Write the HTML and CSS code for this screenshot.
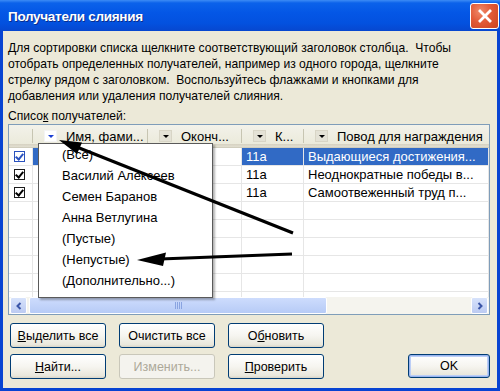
FILE: index.html
```html
<!DOCTYPE html>
<html lang="ru">
<head>
<meta charset="utf-8">
<title>Получатели слияния</title>
<link rel="stylesheet" href="styles.css">
</head>
<body>
<div class="window">
  <div class="titlebar">
    <span class="title">Получатели слияния</span>
    <span class="close">
      <svg width="16" height="16" viewBox="0 0 16 16"><path d="M3 3 L13 13 M13 3 L3 13" stroke="#fff" stroke-width="2.8" stroke-linecap="square"/></svg>
    </span>
  </div>
  <div class="client">
    <p class="intro">Для сортировки списка щелкните соответствующий заголовок столбца.&nbsp; Чтобы<br>отобрать определенных получателей, например из одного города, щелкните<br>стрелку рядом с заголовком.&nbsp; Воспользуйтесь флажками и кнопками для<br>добавления или удаления получателей слияния.</p>
    <div class="label">Списо<u>к</u> получателей:</div>
    <div class="listbox">
      <div class="grid">
        <div class="hdr">
          <div class="hc hc-check"></div>
          <div class="hc"><span class="dd active"></span><span class="ht">Имя, фами...</span></div>
          <div class="hc"><span class="dd"></span><span class="ht">Оконч...</span></div>
          <div class="hc"><span class="dd"></span><span class="ht">К...</span></div>
          <div class="hc hc-last"><span class="dd"></span><span class="ht">Повод для награждения</span></div>
        </div>
        <div class="row sel">
          <div class="c c-check"><span class="cb cb-sel"></span></div>
          <div class="c c-name"></div>
          <div class="c"></div>
          <div class="c">11а</div>
          <div class="c">Выдающиеся достижения...</div>
        </div>
        <div class="row">
          <div class="c c-check"><span class="cb"></span></div>
          <div class="c"></div>
          <div class="c"></div>
          <div class="c">11а</div>
          <div class="c">Неоднократные победы в...</div>
        </div>
        <div class="row">
          <div class="c c-check"><span class="cb"></span></div>
          <div class="c"></div>
          <div class="c"></div>
          <div class="c">11а</div>
          <div class="c">Самоотвеженный труд п...</div>
        </div>
        <div class="row"><div class="c c-check"></div><div class="c"></div><div class="c"></div><div class="c"></div><div class="c"></div></div>
        <div class="row"><div class="c c-check"></div><div class="c"></div><div class="c"></div><div class="c"></div><div class="c"></div></div>
        <div class="row"><div class="c c-check"></div><div class="c"></div><div class="c"></div><div class="c"></div><div class="c"></div></div>
        <div class="row"><div class="c c-check"></div><div class="c"></div><div class="c"></div><div class="c"></div><div class="c"></div></div>
        <div class="row"><div class="c c-check"></div><div class="c"></div><div class="c"></div><div class="c"></div><div class="c"></div></div>
        <div class="row"><div class="c c-check"></div><div class="c"></div><div class="c"></div><div class="c"></div><div class="c"></div></div>
      </div>
      <div class="hscroll">
        <span class="sbtn"><svg width="8" height="8" viewBox="0 0 8 8"><path d="M5.5 1 L2.5 4 L5.5 7" fill="none" stroke="#3a55a8" stroke-width="2"/></svg></span>
        <span class="thumb"><span class="grip"></span></span>
        <span class="track"></span>
        <span class="sbtn"><svg width="8" height="8" viewBox="0 0 8 8"><path d="M2.5 1 L5.5 4 L2.5 7" fill="none" stroke="#3a55a8" stroke-width="2"/></svg></span>
      </div>
    </div>
    <div class="buttons">
      <span class="btn"><u>В</u>ыделить все</span>
      <span class="btn">Очистить все</span>
      <span class="btn">О<u>б</u>новить</span>
      <span class="spacer"></span>
      <span class="spacer"></span>
      <span class="btn"><u>Н</u>айти...</span>
      <span class="btn disabled">Изменить...</span>
      <span class="btn"><u>П</u>роверить</span>
      <span class="spacer"></span>
      <span class="btn default">OK</span>
    </div>
  </div>

  <div class="dropdown">
    <div class="item">(Все)</div>
    <div class="item">Василий Алексеев</div>
    <div class="item">Семен Баранов</div>
    <div class="item">Анна Ветлугина</div>
    <div class="item">(Пустые)</div>
    <div class="item">(Непустые)</div>
    <div class="item">(Дополнительно...)</div>
  </div>

  <svg class="annot" width="500" height="391" viewBox="0 0 500 391">
    <line x1="78" y1="147.5" x2="293" y2="233" stroke="#000" stroke-width="3.2"/>
    <polygon points="59,140 82,142.5 77,154" fill="#000"/>
    <line x1="160" y1="259" x2="292" y2="254" stroke="#000" stroke-width="3.2"/>
    <polygon points="137,260 166,252.5 163,266" fill="#000"/>
  </svg>
</div>
</body>
</html>
```

FILE: styles.css
```css
* { box-sizing: border-box; }
html, body { margin: 0; padding: 0; }
body {
  width: 500px;
  height: 391px;
  overflow: hidden;
  font-family: "Liberation Sans", Arial, sans-serif;
  color: #000;
}
.window {
  position: relative;
  width: 500px;
  height: 391px;
  background: #0844d2;
  display: flex;
  flex-direction: column;
}
.titlebar {
  height: 31px;
  flex: none;
  display: flex;
  align-items: center;
  justify-content: space-between;
  padding: 0 1px 0 8px;
  background: linear-gradient(#3d8cf5 0, #0b62ea 3px, #0457e6 40%, #0351df 75%, #0747cf 100%);
}
.title {
  color: #fff;
  font-weight: bold;
  font-size: 13.5px;
  letter-spacing: -0.3px;
  text-shadow: 1px 1px 0 #0a2d8c;
  margin-top: 1px;
}
.close {
  width: 29px;
  height: 26px;
  border: 1px solid #fff;
  border-radius: 3px;
  background: radial-gradient(circle at 35% 30%, #f08a6a 0, #e25a37 45%, #c9421f 100%);
  display: flex;
  align-items: center;
  justify-content: center;
}
.client {
  flex: 1;
  margin: 0 3px 3px 3px;
  background: #ece9d8;
  padding: 9px 7px 0 5px;
  display: flex;
  flex-direction: column;
}
.intro {
  margin: 0;
  font-size: 12.1px;
  line-height: 16px;
  white-space: nowrap;
}
.label {
  margin-top: 4px;
  font-size: 12.1px;
  line-height: 16px;
}
.listbox {
  width: 482px;
  height: 191px;
  border: 1px solid #7f9db9;
  background: #fff;
  display: flex;
  flex-direction: column;
}
.grid {
  height: 172px;
  overflow: hidden;
}
.hdr, .row {
  display: grid;
  grid-template-columns: 24px 115px 94px 62px 185px;
}
.hdr {
  height: 23px;
  background: linear-gradient(#f3f2ea 0, #ebeadb 85%, #d6d2c2 87%, #e2dfd0 100%);
  border-bottom: 1px solid #d0cdbd;
}
.hc {
  display: flex;
  align-items: center;
  padding-left: 11px;
  font-size: 13px;
  position: relative;
  white-space: nowrap;
  overflow: hidden;
}
.hc::after {
  content: "";
  position: absolute;
  right: 0;
  top: 4px;
  bottom: 4px;
  width: 1px;
  background: #c7c5b2;
  box-shadow: 1px 0 0 #fff;
}
.hc-last::after { display: none; }
.dd {
  width: 13px;
  height: 12px;
  flex: none;
  margin-right: 9px;
  background: #e4e2d6;
  border: 1px solid #d8d5c6;
  position: relative;
}
.dd::before {
  content: "";
  position: absolute;
  left: 3px;
  top: 4px;
  border-left: 3px solid transparent;
  border-right: 3px solid transparent;
  border-top: 3px solid #000;
}
.dd.active {
  background: #fff;
  border-color: #f4f4f4;
}
.dd.active::before { border-top-color: #1b3fd4; }
.row {
  height: 18px;
}
.c {
  border-right: 1px solid #e6e6e6;
  border-bottom: 1px solid #e6e6e6;
  font-size: 13px;
  line-height: 17px;
  padding-left: 4px;
  white-space: nowrap;
  overflow: hidden;
}
.c-check {
  display: flex;
  align-items: center;
  padding-left: 5px;
}
.row.sel .c { background: #316ac5; color: #fff; }
.row.sel .c-check { background: #fff; }
.row.sel .c:nth-child(3) { background: #fff; }
.cb {
  width: 11px;
  height: 11px;
  border: 1px solid #1c1c1c;
  background: #fff;
  position: relative;
}
.cb::after {
  content: "";
  position: absolute;
  left: 2px;
  top: 0px;
  width: 3px;
  height: 6px;
  border-right: 2px solid #000;
  border-bottom: 2px solid #000;
  transform: rotate(40deg);
}
.cb-sel { border-color: #2a52be; }
.cb-sel::after { border-color: #2a52be; }
.hscroll {
  height: 17px;
  display: flex;
  background: #f5f4ee;
  padding: 0 1px;
}
.sbtn {
  width: 17px;
  height: 17px;
  flex: none;
  background: linear-gradient(#d7e2fb, #bccbf2);
  border: 1px solid #fff;
  border-radius: 2px;
  display: flex;
  align-items: center;
  justify-content: center;
}
.thumb {
  width: 298px;
  margin-left: 2px;
  flex: none;
  background: linear-gradient(#cddcfd, #b7cbf6);
  border: 1px solid #fff;
  border-radius: 2px;
  display: flex;
  align-items: center;
  justify-content: center;
}
.grip {
  width: 7px;
  height: 7px;
  background: repeating-linear-gradient(90deg, #8aa4e0 0 1px, transparent 1px 2px);
}
.track { flex: 1; }
.buttons {
  margin-top: 8px;
  padding-left: 2px;
  display: grid;
  grid-template-columns: 96px 96px 96px 1fr 82px;
  column-gap: 13px;
  row-gap: 6px;
}
.btn {
  height: 25px;
  border: 1px solid #003c74;
  border-radius: 3px;
  background: linear-gradient(#ffffff 0, #f6f5f0 50%, #e9e7dc 90%, #d8d4c7 100%);
  font-size: 12.5px;
  display: flex;
  align-items: center;
  justify-content: center;
  white-space: nowrap;
}
.btn.disabled {
  border-color: #c9c7ba;
  background: #f4f3ee;
  color: #aca899;
}
.btn.default {
  box-shadow: inset 0 0 0 1px #98b4ee, inset 0 0 0 2px #bccef6;
  height: 24px;
}
.dropdown {
  position: absolute;
  left: 38px;
  top: 143px;
  width: 175px;
  height: 155px;
  background: #fff;
  border: 1px solid #5a5a5a;
  box-shadow: 2px 2px 2px rgba(0, 0, 0, 0.3);
}
.item {
  height: 21px;
  line-height: 21px;
  padding-left: 23px;
  font-size: 13px;
  white-space: nowrap;
}
.annot {
  position: absolute;
  left: 0;
  top: 0;
  pointer-events: none;
}
```
